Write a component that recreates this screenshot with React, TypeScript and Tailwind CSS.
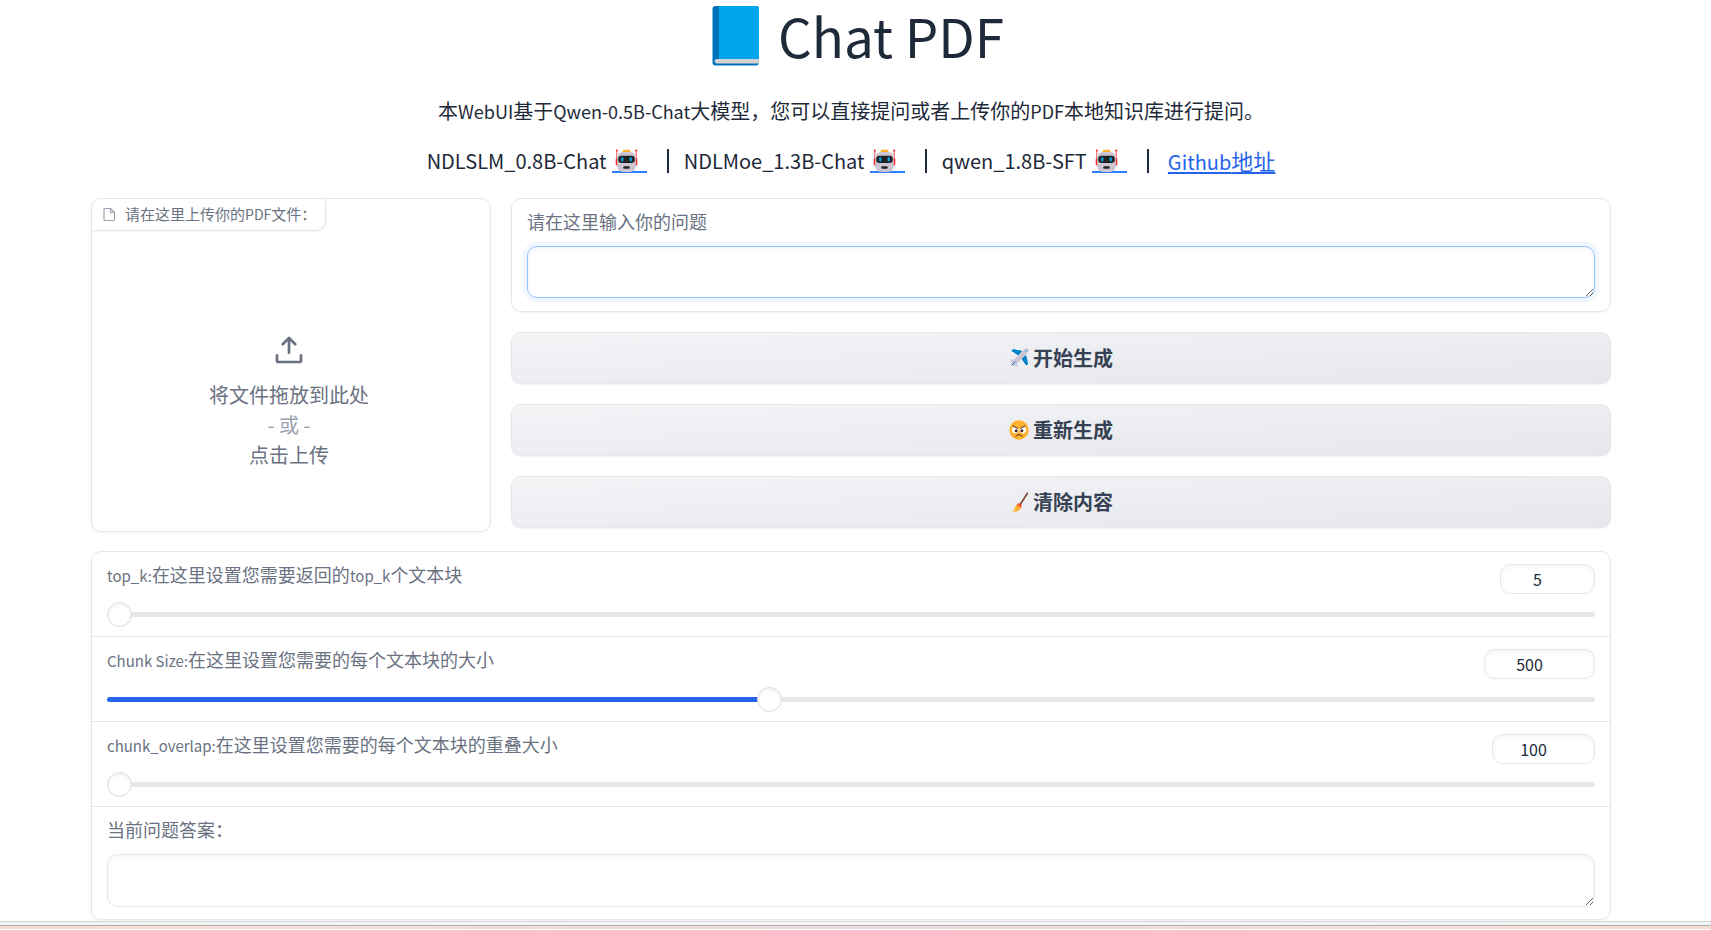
import { useState } from "react";
import type { ReactNode } from "react";

function Latin({ children }: { children: ReactNode }) {
  return <span className="text-[15px]">{children}</span>;
}

function BookIcon() {
  return (
    <svg width="48" height="60" viewBox="0 0 48 60" aria-hidden="true">
      <rect x="0.5" y="0" width="46.5" height="59.5" rx="3" fill="#0074BA" />
      <path d="M7 0H44a3 3 0 0 1 3 3V53H7Z" fill="#00A6ED" />
      <path d="M5 53H47V57.5H5A2.2 2.2 0 0 1 5 53Z" fill="#D3D3D3" />
    </svg>
  );
}

function RobotIcon() {
  return (
    <svg className="inline-block" width="23" height="23" viewBox="0 0 32 32" aria-hidden="true">
      <path d="M2.5 3V15M29.5 3V15" stroke="#F8312F" strokeWidth="1.2" />
      <circle cx="2.5" cy="2.2" r="1.5" fill="#F8312F" />
      <circle cx="29.5" cy="2.2" r="1.5" fill="#F8312F" />
      <rect x="1" y="13" width="5" height="10" rx="1.5" fill="#F8312F" />
      <rect x="26" y="13" width="5" height="10" rx="1.5" fill="#F8312F" />
      <rect x="10.5" y="1" width="11" height="5" rx="2" fill="#FFB02E" />
      <rect x="3" y="4" width="26" height="28" rx="8" fill="#CDC4D6" />
      <rect x="4.5" y="9.5" width="23" height="10" rx="4.5" fill="#212121" />
      <rect x="8.5" y="11.5" width="3.2" height="6" rx="1.4" fill="#00A6ED" />
      <rect x="20.3" y="11.5" width="3.2" height="6" rx="1.4" fill="#00A6ED" />
      <rect x="11.5" y="24" width="9" height="3.5" rx="1.5" fill="#212121" />
    </svg>
  );
}

function PlaneIcon() {
  return (
    <svg width="20" height="20" viewBox="0 0 32 32" aria-hidden="true">
      <path d="M4 4.500 7 2 21 5 15 12ZM27.500 28 30 25.500 27 11 20 17Z" fill="#0074BA" />
      <path d="M4 4.500 7 2 20 4.500 14 10ZM28 27.500 30.500 25 27.500 12 22 17Z" fill="#0084CE" />
      <path d="M1 21 3.500 18.500 11 19 8 23ZM11 31 13.500 28.500 13 21 9 24Z" fill="#CDC4D6" />
      <path d="M31 1C28-.5 24.500 2 22 4.500L6.500 20C4 23 3 26 4 28S9 28 12 25.500L27.500 10C30 7.500 32.500 4 31 1Z" fill="#CDC4D6" />
      <path d="m4.500 27.500 6-6" stroke="#0074BA" strokeWidth="1.500" />
      <path d="M26 3.500 28.500 6" stroke="#26C9FC" strokeWidth="1.800" />
    </svg>
  );
}

function AngryIcon() {
  return (
    <svg width="20" height="20" viewBox="0 0 32 32" aria-hidden="true">
      <circle cx="16" cy="16" r="15.500" fill="#FFB02E" />
      <circle cx="10" cy="16" r="5.200" fill="#fff" />
      <circle cx="22" cy="16" r="5.200" fill="#fff" />
      <path d="M6 9 14.500 14V10ZM26 9 17.500 14V10Z" fill="#FFB02E" />
      <circle cx="11.500" cy="17" r="2.400" fill="#402A32" />
      <circle cx="20.500" cy="17" r="2.400" fill="#402A32" />
      <path d="m6.500 9.500 7 4M25.500 9.500l-7 4M11 26c2-3.500 8-3.500 10 0" fill="none" stroke="#402A32" strokeWidth="1.600" strokeLinecap="round" />
    </svg>
  );
}

function BroomIcon() {
  return (
    <svg width="20" height="20" viewBox="0 0 32 32" aria-hidden="true">
      <path d="M29.500 2 18 20" stroke="#7D4533" strokeWidth="2.600" strokeLinecap="round" />
      <path d="M15.500 17.500 20.500 21 18.500 25.500 12 21Z" fill="#F8312F" />
      <path d="M12 20.500 19 25.500C17 30 13 32 5 31 9 29.500 9.500 24 12 20.500Z" fill="#FFB02E" />
      <path d="M13.500 19 20 23.500 19 26 12 21Z" fill="#FF822D" />
    </svg>
  );
}

function FileIcon() {
  return (
    <svg width="13" height="15" viewBox="0 0 13 15" fill="none" stroke="#9ca3af" strokeWidth="1.200" strokeLinejoin="round" aria-hidden="true">
      <path d="M2 1.500H7.500L11.500 5.500V12.500A1 1 0 0 1 10.500 13.500H2A1 1 0 0 1 1 12.500V2.500A1 1 0 0 1 2 1.500Z" />
      <path d="M7.500 1.500V5.500H11.500" />
    </svg>
  );
}

function UploadIcon() {
  return (
    <svg width="36" height="36" viewBox="0 0 24 24" fill="none" stroke="currentColor" strokeWidth="1.800" strokeLinecap="round" strokeLinejoin="round" aria-hidden="true">
      <path d="M20 15.500V19a1 1 0 0 1-1 1H5a1 1 0 0 1-1-1v-3.500" />
      <path d="m7.800 8.200 4.200-4.200 4.200 4.200M12 4.200v9.600" />
    </svg>
  );
}

function ModelLink({ name }: { name: string }) {
  return (
    <>
      <span>{name}</span>
      <a href="#model" aria-label={name} className="ml-[5px] flex h-6 w-[35px] justify-start border-b-2 border-blue-500 pl-[3px]">
        <RobotIcon />
      </a>
      <span className="mr-[15px] ml-5 h-6 w-[2px] bg-gray-800" />
    </>
  );
}

type SliderProps = {
  id: string;
  label: ReactNode;
  min: number;
  max: number;
  initial: number;
  boxWidth: string;
};

function SliderRow({ id, label, min, max, initial, boxWidth }: SliderProps) {
  const [value, setValue] = useState(initial);
  const percent = ((value - min) / (max - min)) * 100;
  return (
    <div className="border-b border-gray-200 px-[15px] pt-3 pb-[9px]">
      <div className="flex items-start justify-between">
        <label htmlFor={id} className="text-[18px] leading-5 text-gray-500">{label}</label>
        <input
          type="number"
          aria-label={id}
          value={value}
          onChange={(e) => setValue(Number(e.target.value))}
          className={`${boxWidth} h-[30px] appearance-none rounded-[10px] border border-gray-200 pr-5 text-center text-[16px] text-gray-800 shadow-[inset_0_2px_4px_rgba(0,0,0,0.05)] outline-none [&::-webkit-inner-spin-button]:appearance-none`}
        />
      </div>
      <input
        id={id}
        type="range"
        min={min}
        max={max}
        value={value}
        onChange={(e) => setValue(Number(e.target.value))}
        style={{ backgroundImage: `linear-gradient(to right, #2563eb ${percent}%, #e5e7eb ${percent}%)` }}
        className="mt-[18px] mb-[10px] block h-[5px] w-full appearance-none rounded-full [&::-webkit-slider-thumb]:size-[25px] [&::-webkit-slider-thumb]:appearance-none [&::-webkit-slider-thumb]:rounded-full [&::-webkit-slider-thumb]:border [&::-webkit-slider-thumb]:border-solid [&::-webkit-slider-thumb]:border-[#dcdcdc] [&::-webkit-slider-thumb]:bg-white [&::-webkit-slider-thumb]:shadow-[inset_0_2px_4px_rgba(0,0,0,0.06)]"
      />
    </div>
  );
}

function ActionButton({ icon, children }: { icon: ReactNode; children: ReactNode }) {
  return (
    <button
      type="button"
      className="flex h-[52px] w-full items-center justify-center gap-1 rounded-[10px] border border-gray-200 bg-linear-to-br from-gray-100 to-gray-200 text-[20px] font-bold text-gray-700 shadow-xs"
    >
      {icon}
      <span>{children}</span>
    </button>
  );
}

export default function App() {
  return (
    <div className="bg-white font-['Noto_Sans_CJK_SC','Noto_Sans',sans-serif] text-gray-800">
      <main className="pr-[100px] pl-[91px]">
        <h1 className="flex h-[71px] items-center justify-center gap-[18px] pl-[14px] text-[53px] leading-[71px]">
          <BookIcon />
          <span>Chat PDF</span>
        </h1>
        <p className="mt-6 text-center text-[20px] leading-8">
          本<span className="text-[18px]">WebUI</span>基于<span className="text-[18px]">Qwen-0.5B-Chat</span>大模型，您可以直接提问或者上传你的<span className="text-[18px]">PDF</span>本地知识库进行提问。
        </p>
        <div className="mt-4 flex h-9 items-center justify-center text-[20px] leading-8">
          <ModelLink name="NDLSLM_0.8B-Chat" />
          <ModelLink name="NDLMoe_1.3B-Chat" />
          <ModelLink name="qwen_1.8B-SFT" />
          <a href="#github" className="ml-1 text-[#2563eb] underline decoration-2 underline-offset-2">
            Github<span className="text-[22px]">地址</span>
          </a>
        </div>

        <div className="mt-[19px] grid grid-cols-[4fr_11fr] items-start gap-5">
          <section className="flex h-[334px] flex-col rounded-[10px] border border-gray-200 shadow-xs">
            <div className="flex h-8 items-center gap-[9px] self-start rounded-br-[10px] border-r border-b border-gray-200 pr-[9px] pl-[11px] text-[15px] text-gray-500 shadow-xs">
              <FileIcon />
              <span>请在这里上传你的<span className="text-[14px]">PDF</span>文件：</span>
            </div>
            <button type="button" className="flex flex-1 flex-col items-center justify-center pt-10 pr-1 text-[20px] leading-[30px] text-gray-500">
              <UploadIcon />
              <span className="mt-3">将文件拖放到此处</span>
              <span className="text-gray-400">- 或 -</span>
              <span>点击上传</span>
            </button>
          </section>

          <section className="flex flex-col gap-5">
            <div className="flex h-[114px] flex-col rounded-[10px] border border-gray-200 px-[15px] pt-3 shadow-xs">
              <label htmlFor="question" className="text-[18px] leading-5 text-gray-500">请在这里输入你的问题</label>
              <textarea
                id="question"
                className="mt-[15px] h-[52px] w-full resize-y rounded-[10px] border border-blue-300 p-3 text-[18px] shadow-[0_0_0_4px_#eff6ff,inset_0_2px_4px_rgba(0,0,0,0.05)] outline-none"
              />
            </div>
            <ActionButton icon={<PlaneIcon />}>开始生成</ActionButton>
            <ActionButton icon={<AngryIcon />}>重新生成</ActionButton>
            <ActionButton icon={<BroomIcon />}>清除内容</ActionButton>
          </section>
        </div>

        <section className="mt-[19px] rounded-[10px] border border-gray-200 shadow-xs">
          <SliderRow
            id="top_k"
            label={<><Latin>top_k:</Latin>在这里设置您需要返回的<Latin>top_k</Latin>个文本块</>}
            min={5}
            max={10}
            initial={5}
            boxWidth="w-[95px]"
          />
          <SliderRow
            id="chunk_size"
            label={<><Latin>Chunk Size:</Latin>在这里设置您需要的每个文本块的大小</>}
            min={100}
            max={1000}
            initial={500}
            boxWidth="w-[111px]"
          />
          <SliderRow
            id="chunk_overlap"
            label={<><Latin>chunk_overlap:</Latin>在这里设置您需要的每个文本块的重叠大小</>}
            min={100}
            max={500}
            initial={100}
            boxWidth="w-[103px]"
          />
          <div className="flex flex-col px-[15px] pt-3 pb-3">
            <label htmlFor="answer" className="text-[18px] leading-5 text-gray-500">当前问题答案：</label>
            <textarea
              id="answer"
              className="mt-[15px] h-[53px] w-full resize-y rounded-[10px] border border-gray-200 p-3 text-[18px] shadow-[inset_0_2px_4px_rgba(0,0,0,0.05)] outline-none"
            />
          </div>
        </section>
      </main>
      <footer className="mt-px">
        <div className="h-1 border-t border-gray-300 bg-gray-100" />
        <div className="h-1 border-t border-[#b5abab] bg-linear-to-r from-[#f5dfd3] via-[#ecdbe0] to-[#f5dfd3]" />
      </footer>
    </div>
  );
}
